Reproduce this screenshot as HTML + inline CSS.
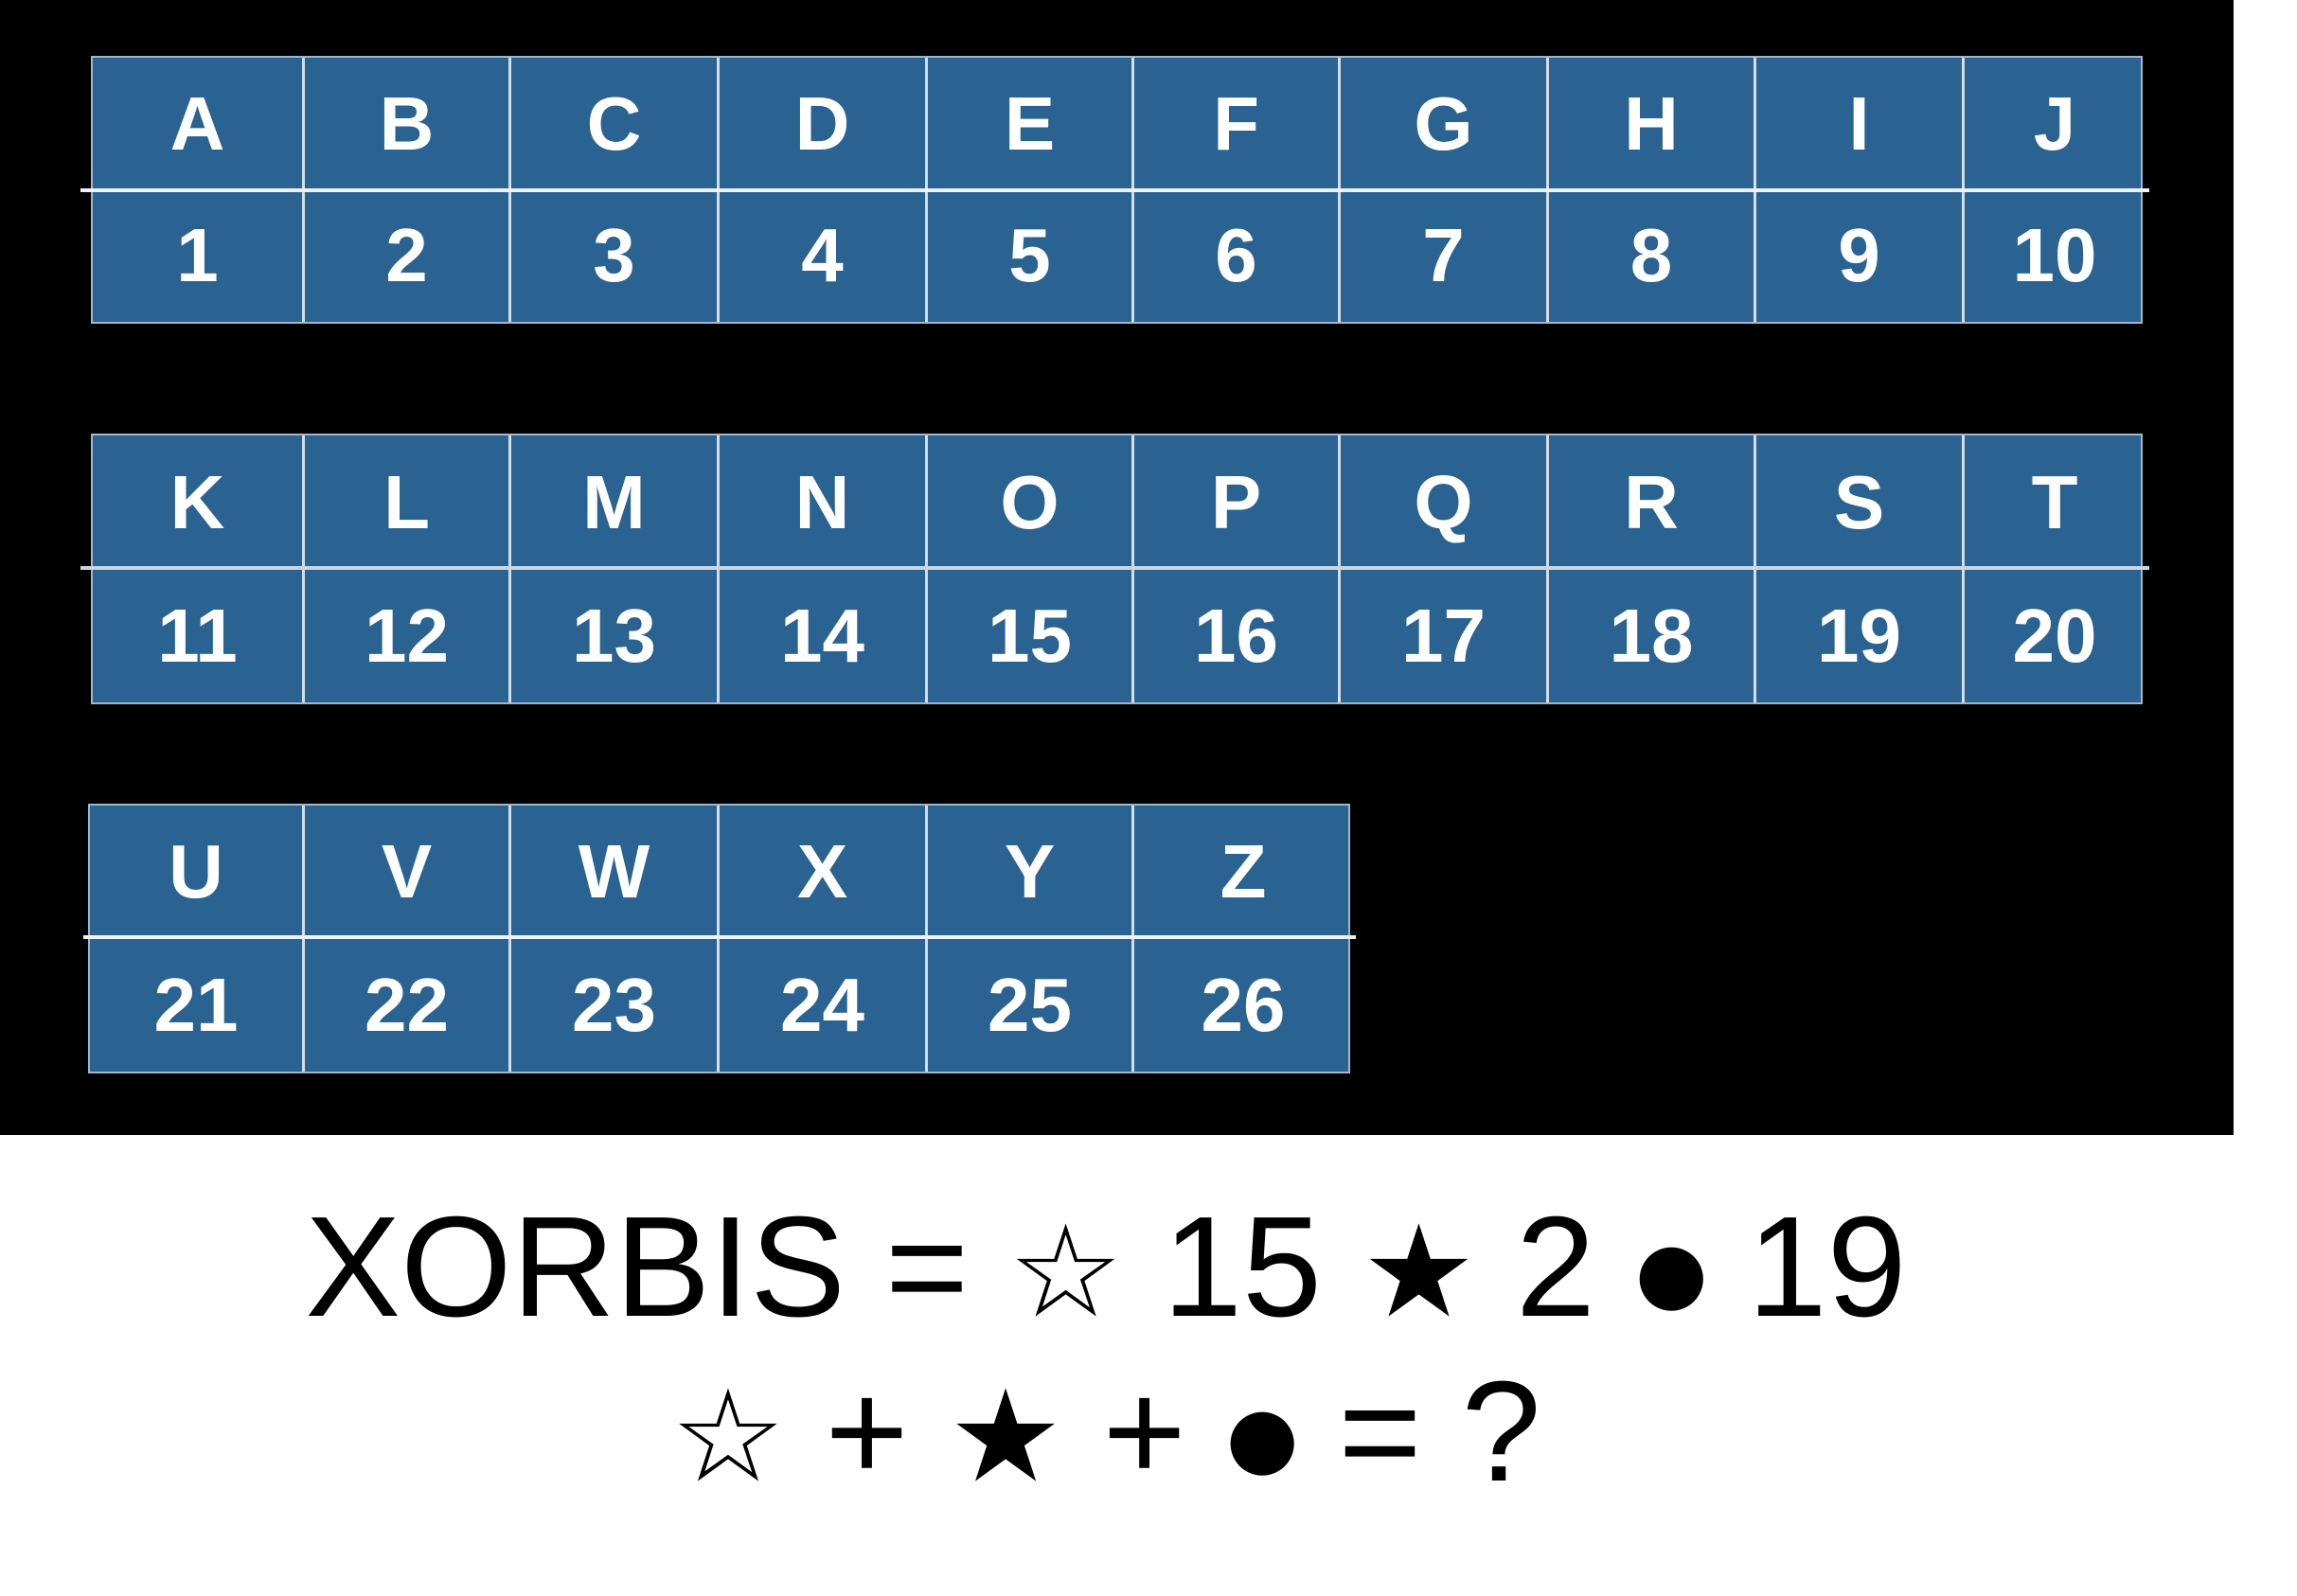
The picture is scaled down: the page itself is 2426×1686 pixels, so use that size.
<!DOCTYPE html>
<html><head><meta charset="utf-8"><style>
html,body{margin:0;padding:0;background:#fff;width:2426px;height:1686px;overflow:hidden;position:relative;font-family:"Liberation Sans",Arial,sans-serif}
.black{position:absolute;left:0;top:0;width:2359px;height:1199px;background:#000}
.tbl{position:absolute;display:grid;background:#2a6391;border:2px solid #9fb6cc;box-sizing:border-box}
.c{display:flex;flex-direction:column;border-left:3px solid #d4dde6;color:#fff;font-weight:bold;font-size:80px}
.c:first-child{border-left:none}
.c span{flex:1;display:flex;align-items:center;justify-content:center}
.hl{position:absolute;height:4px;background:#eef2f6}
.eq{position:absolute;left:0;width:2336px;text-align:center;color:#000;font-size:151px;line-height:1;white-space:nowrap}
.st{font-family:"DejaVu Sans",sans-serif;font-size:135px}
.ci{font-family:"DejaVu Sans",sans-serif;font-size:88px;position:relative;top:-16px}
</style></head><body>
<div class="black"></div>

<div class="tbl" style="left:96px;top:59px;width:2167px;height:283px;grid-template-columns:221px 218px 220px 220px 218px 218px 220px 219px 220px 193px">
<div class="c"><span>A</span><span>1</span></div>
<div class="c"><span>B</span><span>2</span></div>
<div class="c"><span>C</span><span>3</span></div>
<div class="c"><span>D</span><span>4</span></div>
<div class="c"><span>E</span><span>5</span></div>
<div class="c"><span>F</span><span>6</span></div>
<div class="c"><span>G</span><span>7</span></div>
<div class="c"><span>H</span><span>8</span></div>
<div class="c"><span>I</span><span>9</span></div>
<div class="c"><span>J</span><span>10</span></div>
</div>
<div class="hl" style="left:85px;top:199px;width:2185px"></div>

<div class="tbl" style="left:96px;top:458px;width:2167px;height:286px;grid-template-columns:221px 218px 220px 220px 218px 218px 220px 219px 220px 193px">
<div class="c"><span>K</span><span>11</span></div>
<div class="c"><span>L</span><span>12</span></div>
<div class="c"><span>M</span><span>13</span></div>
<div class="c"><span>N</span><span>14</span></div>
<div class="c"><span>O</span><span>15</span></div>
<div class="c"><span>P</span><span>16</span></div>
<div class="c"><span>Q</span><span>17</span></div>
<div class="c"><span>R</span><span>18</span></div>
<div class="c"><span>S</span><span>19</span></div>
<div class="c"><span>T</span><span>20</span></div>
</div>
<div class="hl" style="left:85px;top:598px;width:2185px;background:#c9d6e2"></div>

<div class="tbl" style="left:93px;top:849px;width:1333px;height:285px;grid-template-columns:224px 218px 220px 220px 218px 233px">
<div class="c"><span>U</span><span>21</span></div>
<div class="c"><span>V</span><span>22</span></div>
<div class="c"><span>W</span><span>23</span></div>
<div class="c"><span>X</span><span>24</span></div>
<div class="c"><span>Y</span><span>25</span></div>
<div class="c"><span>Z</span><span>26</span></div>
</div>
<div class="hl" style="left:88px;top:988px;width:1344px"></div>

<div class="eq" style="top:1262px">XORBIS = <span class="st">☆</span> 15 <span class="st">★</span> 2 <span class="ci">●</span> 19</div>
<div class="eq" style="top:1436px"><span class="st">☆</span> + <span class="st">★</span> + <span class="ci">●</span> = ?</div>
</body></html>
